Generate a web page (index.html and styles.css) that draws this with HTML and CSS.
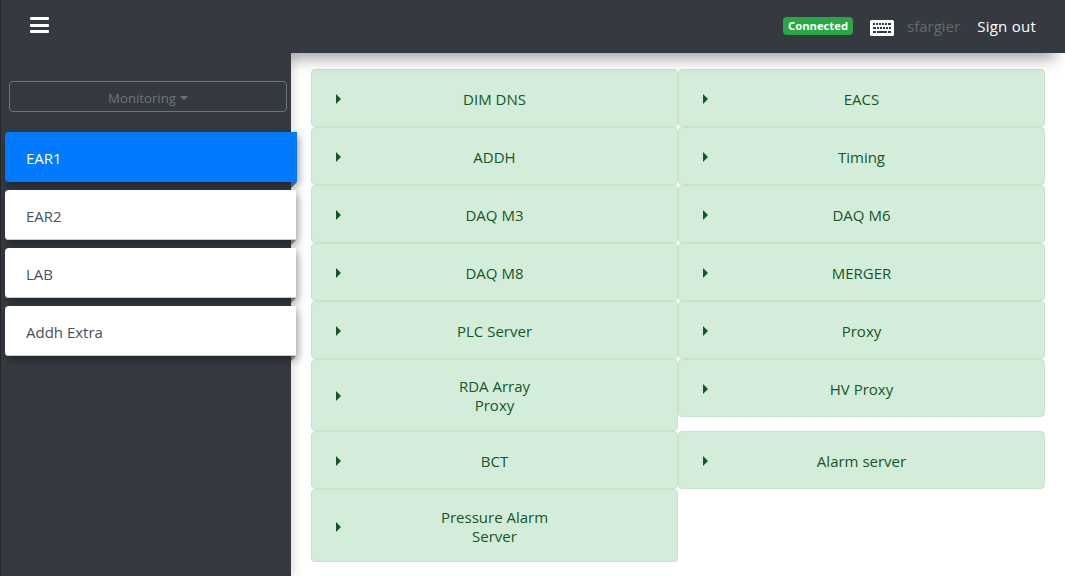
FILE: index.html
```html
<!DOCTYPE html>
<html lang="en">
<head>
<meta charset="utf-8">
<title>Monitoring</title>
<link rel="stylesheet" href="styles.css">
</head>
<body>
<header class="topbar">
  <button class="burger" aria-label="Menu"><span></span><span></span><span></span></button>
  <div class="topbar-right">
    <span class="badge">Connected</span>
    <svg class="kbd" viewBox="0 0 24 16" width="24" height="16"><path fill="#fff" fill-rule="evenodd" d="M1.5 0h21A1.5 1.5 0 0 1 24 1.5v13a1.5 1.5 0 0 1-1.5 1.5h-21A1.5 1.5 0 0 1 0 14.5v-13A1.5 1.5 0 0 1 1.5 0zM3 3v2h2V3zm3 0v2h2V3zm3 0v2h2V3zm3 0v2h2V3zm3 0v2h2V3zm3 0v2h3V3zM3 7v2h3V7zm4 0v2h2V7zm3 0v2h2V7zm3 0v2h2V7zm3 0v2h2V7zm3 0v2h2V7zM3 11v2h3v-2zm4 0v2h10v-2zm11 0v2h3v-2z"/></svg>
    <span class="user">sfargier</span>
    <a class="signout">Sign out</a>
  </div>
</header>
<div class="body-row">
  <aside class="sidebar">
    <button class="monitor">Monitoring<i class="caret"></i></button>
    <ul class="nav">
      <li class="nav-item active">EAR1</li>
      <li class="nav-item">EAR2</li>
      <li class="nav-item">LAB</li>
      <li class="nav-item">Addh Extra</li>
    </ul>
  </aside>
  <main class="content">
    <div class="grid">
      <div class="card"><i class="arrow"></i><span class="label">DIM DNS</span></div>
      <div class="card"><i class="arrow"></i><span class="label">EACS</span></div>
      <div class="card"><i class="arrow"></i><span class="label">ADDH</span></div>
      <div class="card"><i class="arrow"></i><span class="label">Timing</span></div>
      <div class="card"><i class="arrow"></i><span class="label">DAQ M3</span></div>
      <div class="card"><i class="arrow"></i><span class="label">DAQ M6</span></div>
      <div class="card"><i class="arrow"></i><span class="label">DAQ M8</span></div>
      <div class="card"><i class="arrow"></i><span class="label">MERGER</span></div>
      <div class="card"><i class="arrow"></i><span class="label">PLC Server</span></div>
      <div class="card"><i class="arrow"></i><span class="label">Proxy</span></div>
      <div class="card"><i class="arrow"></i><span class="label">RDA Array<br>Proxy</span></div>
      <div class="card top"><i class="arrow"></i><span class="label">HV Proxy</span></div>
      <div class="card"><i class="arrow"></i><span class="label">BCT</span></div>
      <div class="card"><i class="arrow"></i><span class="label">Alarm server</span></div>
      <div class="card"><i class="arrow"></i><span class="label">Pressure Alarm<br>Server</span></div>
    </div>
  </main>
</div>
</body>
</html>
```
FILE: styles.css
```css
* { box-sizing: border-box; }
html, body { margin: 0; height: 100%; }
body {
  font-family: "Open Sans", sans-serif;
  font-size: 15px;
  line-height: 19.2px;
  background: #343a40;
  overflow: hidden;
  display: flex;
  flex-direction: column;
}
.topbar {
  height: 53px;
  flex: none;
  background: #343a40;
  display: flex;
  align-items: center;
  justify-content: space-between;
  padding: 0 29px 0 30px;
  position: relative;
  z-index: 2;
  box-shadow: -10px 6px 14px rgba(0,0,0,.35), inset 1px 0 0 #23272b;
}
.burger {
  width: 19px;
  height: 16px;
  margin-top: -3px;
  padding: 0;
  border: 0;
  background: none;
  display: flex;
  flex-direction: column;
  justify-content: space-between;
}
.burger span { display: block; height: 3px; width: 19px; background: #fff; border-radius: 1px; }
.topbar-right { display: flex; align-items: center; }
.badge {
  width: 70px;
  height: 18px;
  background: #28a745;
  color: #fff;
  font-size: 11.25px;
  font-weight: 700;
  line-height: 18px;
  text-align: center;
  border-radius: 4px;
  margin: -1px 17px 0 0;
}
.kbd { margin-right: 13px; margin-top: 3px; }
.user { color: rgba(255,255,255,.25); margin-right: 17px; }
.signout { color: #fff; letter-spacing: .25px; }
.body-row { flex: 1; display: flex; min-height: 0; }
.sidebar {
  width: 291px;
  flex: none;
  padding-top: 28px;
  position: relative;
  z-index: 3;
  background: #343a40;
  box-shadow: 4px 0 8px rgba(0,0,0,.1), inset 1px 0 0 #23272b;
}
.monitor {
  display: block;
  width: 278px;
  height: 31px;
  margin-left: 9px;
  border: 1px solid #6c757d;
  border-radius: 4px;
  background: none;
  color: #6c757d;
  font: 13.2px/19px "Open Sans", sans-serif;
  padding: 3px 0 0;
}
.caret {
  display: inline-block;
  margin-left: 4px;
  vertical-align: 3px;
  border-top: 4px solid;
  border-left: 4px solid transparent;
  border-right: 4px solid transparent;
}
.nav { list-style: none; margin: 20px 0 0 5px; padding: 0; }
.nav-item {
  position: relative;
  width: 291px;
  height: 50px;
  margin-bottom: 8px;
  padding: 3px 21px 0;
  line-height: 19px;
  display: flex;
  align-items: center;
  background: #fff;
  color: #495057;
  border-radius: 4px 0 0 4px;
  box-shadow: 2px 4px 8px rgba(0,0,0,.35), inset 0 -1px 0 #ccc;
}
.nav-item.active { width: 292px; background: #007bff; color: #fff; box-shadow: 2px 4px 8px rgba(0,0,0,.35); }
.nav-item::after {
  content: "";
  position: absolute;
  right: 0;
  top: 100%;
  border-top: 5px solid #777;
  border-right: 5px solid transparent;
}
.nav-item.active::after { border-top-width: 6px; border-right-width: 6px; border-top-color: #3c5f8f; }
.content { flex: 1; min-width: 0; background: #fff; padding: 16px 20px 0; }
.grid { display: grid; grid-template-columns: 367px 367px; align-items: start; }
.card {
  position: relative;
  min-height: 58px;
  background: #d4edda;
  border: 1px solid #c3e6cb;
  border-radius: 4px;
  color: #155724;
  display: flex;
  align-items: center;
  justify-content: center;
  text-align: center;
  padding: 17.15px 0 14.85px;
}
.grid > .card { align-self: stretch; }
.grid > .card.top { align-self: start; }
.label { display: block; width: 100%; }
.arrow {
  position: absolute;
  left: 24px;
  top: 50%;
  margin-top: -4px;
  border-left: 5px solid #155724;
  border-top: 5px solid transparent;
  border-bottom: 5px solid transparent;
}
```
